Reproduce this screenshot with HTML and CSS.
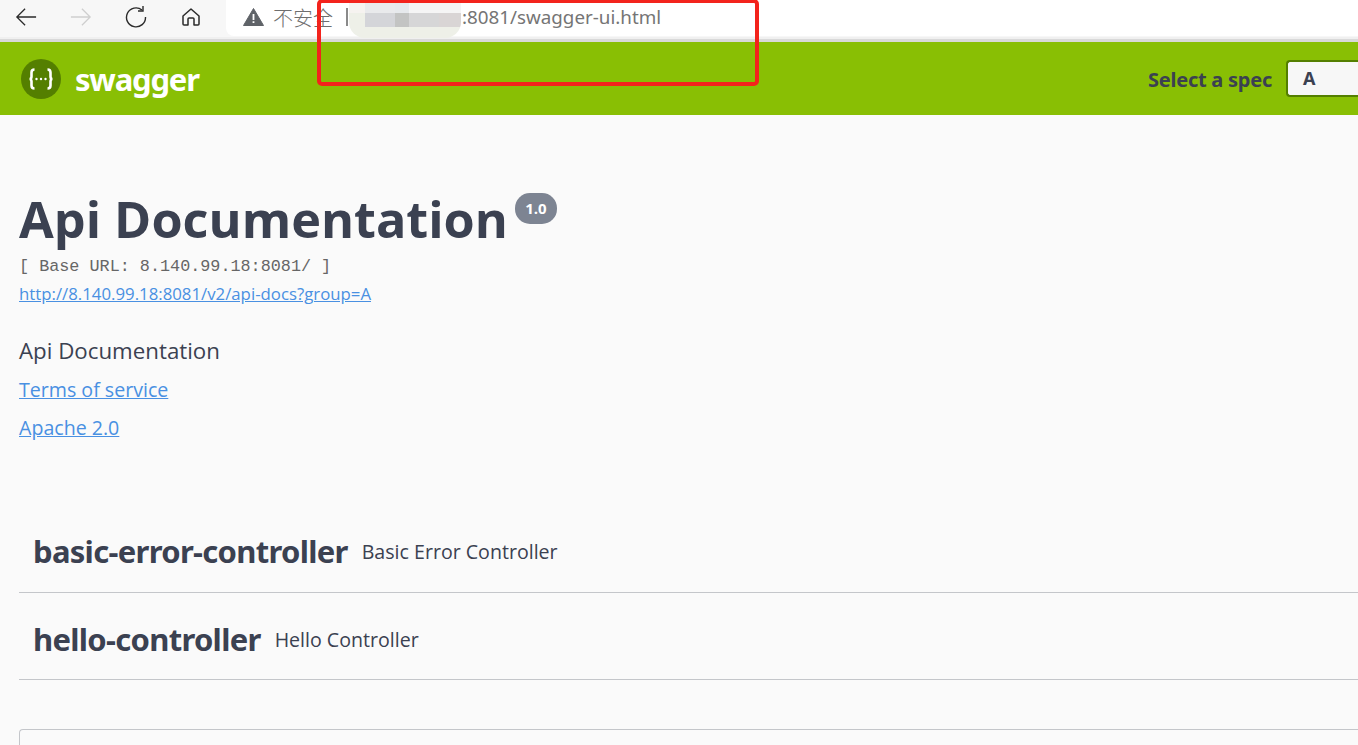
FILE: index.html
```html
<!DOCTYPE html>
<html lang="en">
<head>
<meta charset="UTF-8">
<meta name="viewport" content="width=device-width, initial-scale=1.0">
<title>Swagger UI</title>
<link rel="stylesheet" href="styles.css">
</head>
<body>
  <div class="browser-bar">
    <div class="nav-icons">
      <svg class="nav-back" width="22" height="22" viewBox="0 0 24 24" fill="none" stroke="#2b2b2b" stroke-width="1.4"><path d="M2 12H23M11 3L2 12L11 21"/></svg>
      <svg class="nav-forward" width="22" height="22" viewBox="0 0 24 24" fill="none" stroke="#cfcfcf" stroke-width="1.4"><path d="M1 12H22M13 3L22 12L13 21"/></svg>
      <svg class="nav-reload" width="22" height="22" viewBox="0 0 22 22" fill="none" stroke="#2b2b2b" stroke-width="1.4"><path d="M17 4A9.5 9.5 0 1 0 20.500 11"/><path d="M18 0V5H13"/></svg>
      <svg class="nav-home" width="20" height="20" viewBox="0 0 20 20" fill="none" stroke="#2b2b2b" stroke-width="1.5" stroke-linejoin="round"><path d="M2 9L10 2L18 9V17Q18 18 17 18H13V12Q13 11 12 11H8Q7 11 7 12V18H3Q2 18 2 17Z"/></svg>
    </div>
    <div class="address-bar">
      <svg class="warn-icon" width="21" height="18" viewBox="0 0 21 18"><path d="M10.500 0.500L20.500 17.500H0.500Z" fill="#5f6368" stroke="#5f6368" stroke-linejoin="round"/><path d="M9.600 6H11.400V12H9.600ZM9.600 13.300H11.400V15H9.600Z" fill="#fff"/></svg>
      <span class="not-secure">不安全</span>
      <span class="addr-sep"></span>
      <span class="addr-host"></span>
      <span class="addr-url">:8081/swagger-ui.html</span>
    </div>
  </div>

  <div class="topbar">
    <svg class="logo" width="40" height="40" viewBox="0 0 40 40">
      <circle cx="20" cy="20" r="20" fill="#547f00"/>
      <path d="M13.500 10.500Q10.500 10.500 10.500 13.500V17.500Q10.500 20 8.500 20Q10.500 20 10.500 22.500V26.500Q10.500 29.500 13.500 29.500M26.500 10.500Q29.500 10.500 29.500 13.500V17.500Q29.500 20 31.500 20Q29.500 20 29.500 22.500V26.500Q29.500 29.500 26.500 29.500" fill="none" stroke="#fff" stroke-width="2.600"/>
      <circle cx="15.500" cy="20" r="1.200" fill="#fff"/><circle cx="20" cy="20" r="1.200" fill="#fff"/><circle cx="24.500" cy="20" r="1.200" fill="#fff"/>
    </svg>
    <span class="brand">swagger</span>
    <div class="spec-select">
      <span class="spec-label">Select a spec</span>
      <span class="spec-box">A</span>
    </div>
  </div>

  <div class="content">
    <div class="title-row">
      <h1 class="title">Api Documentation</h1>
      <span class="version">1.0</span>
    </div>
    <div class="base-url">[ Base URL: 8.140.99.18:8081/ ]</div>
    <a class="docs-link" href="#">http://8.140.99.18:8081/v2/api-docs?group=A</a>

    <p class="info-text">Api Documentation</p>
    <a class="info-link terms" href="#">Terms of service</a>
    <a class="info-link license" href="#">Apache 2.0</a>

    <div class="tags">
      <div class="tag"><h3>basic-error-controller</h3><span>Basic Error Controller</span></div>
      <div class="tag"><h3>hello-controller</h3><span>Hello Controller</span></div>
    </div>

    <div class="models"></div>
  </div>

  <div class="red-box"></div>
</body>
</html>
```

FILE: styles.css
```css
html, body {
  margin: 0;
  padding: 0;
  height: 745px;
  overflow: hidden;
}
body {
  background-color: #fafafa;
  color: #3b4151;
  font-family: "Open Sans", sans-serif;
  position: relative;
}
.browser-bar {
  height: 37px;
  background-color: #f7f7f7;
  border-bottom: 5px solid #f0f0f0;
  display: flex;
  position: relative;
}
.browser-bar::after {
  content: "";
  position: absolute;
  left: 0;
  right: 0;
  bottom: -5px;
  height: 3px;
  background-color: #d9d9d9;
}
.nav-icons {
  width: 226px;
  display: flex;
  align-items: center;
  height: 34px;
}
.nav-back { margin-left: 15px; }
.nav-forward { margin-left: 33px; }
.nav-reload { margin-left: 33px; }
.nav-home { margin-left: 34px; }
.address-bar {
  flex: 1;
  height: 36px;
  background-color: #fff;
  border-bottom-left-radius: 8px;
  display: flex;
  align-items: center;
  font-family: "Noto Sans", sans-serif;
  font-size: 18.800px;
  color: #5f6368;
}
.warn-icon { margin-left: 17px; margin-top: -2px; }
.not-secure {
  margin-left: 9px;
  margin-top: -2px;
  font-family: "Noto Sans CJK SC", sans-serif;
  font-size: 20px;
  font-weight: 300;
  color: #6e6e6e;
}
.addr-sep {
  width: 2px;
  height: 18px;
  background-color: #8a8a8a;
  margin-left: 13px;
  margin-top: -2px;
}
.addr-host {
  width: 112px;
  height: 38px;
  margin-left: 1px;
  align-self: flex-start;
  position: relative;
  z-index: 1;
  border-radius: 0 0 16px 16px;
  background:
    linear-gradient(90deg, transparent 0 16px, #d4d5d9 16px 46px, #c3c4c3 46px 60px, #d6d6d7 60px 90px, #d9d5d5 90px 112px) 0 13px / 100% 14px no-repeat,
    linear-gradient(90deg, #f6f3f0 0 16px, #e9eaec 16px 46px, #e6e9ec 46px 60px, #f5f5f5 60px 112px) 0 0 / 100% 13px no-repeat,
    #eef0e8;
}
.addr-url {
  color: #757575;
  margin-top: -2px;
  margin-left: 1px;
}
.topbar {
  height: 73px;
  background-color: #89bf04;
  display: flex;
  align-items: center;
  padding-left: 21px;
}
.brand {
  margin-left: 14px;
  font-family: "Noto Sans", sans-serif;
  font-size: 31px;
  font-weight: 700;
  letter-spacing: -1.2px;
  color: #fff;
}
.spec-select {
  margin-left: auto;
  display: flex;
  align-items: center;
}
.spec-label {
  margin-top: 2px;
  font-family: "Noto Sans", sans-serif;
  font-size: 20px;
  font-weight: 700;
  letter-spacing: -0.25px;
  color: #3b4151;
}
.spec-box {
  width: 73px;
  height: 37px;
  margin-left: 14px;
  margin-right: -1px;
  padding-left: 15px;
  box-sizing: border-box;
  background-color: #f7f7f7;
  border: 2px solid #547f00;
  border-right: none;
  border-radius: 4px 0 0 4px;
  font-family: "Noto Sans", sans-serif;
  font-size: 18px;
  font-weight: 700;
  line-height: 33px;
}
.content {
  padding-left: 19px;
}
.title-row {
  display: flex;
  align-items: flex-start;
  padding-top: 72px;
  height: 67px;
}
.title {
  margin: 0;
  font-family: "Open Sans", sans-serif;
  font-size: 50.400px;
  font-weight: 700;
  line-height: 64px;
}
.version {
  margin-left: 7px;
  margin-top: 6px;
  width: 42px;
  height: 31px;
  border-radius: 15px;
  background-color: #7d8492;
  color: #fff;
  font-size: 15px;
  font-weight: 700;
  line-height: 31px;
  text-align: center;
}
.base-url {
  margin-top: 3px;
  font-family: "Liberation Mono", monospace;
  font-size: 16.800px;
  line-height: 20px;
  color: #666;
}
.docs-link {
  display: block;
  margin-top: 7px;
  font-size: 16.800px;
  line-height: 20px;
  color: #4990e2;
}
.info-text {
  margin: 33px 0 0;
  font-size: 22.300px;
  line-height: 28px;
}
.info-link {
  display: block;
  font-size: 19.600px;
  line-height: 26px;
  color: #4990e2;
}
.terms { margin-top: 12px; }
.license { margin-top: 12px; }
.tags {
  margin-top: 65px;
}
.tag {
  height: 87px;
  box-sizing: border-box;
  padding-left: 14px;
  padding-top: 4px;
  display: flex;
  align-items: center;
  gap: 14px;
  border-bottom: 1px solid #c4c6ca;
}
.tag h3 {
  margin: 0;
  font-family: "Noto Sans", sans-serif;
  font-size: 31px;
  font-weight: 700;
  letter-spacing: -0.7px;
  color: #3b4151;
}
.tag span {
  font-size: 19.600px;
}
.tag + .tag {
  padding-top: 6px;
}
.models {
  margin-top: 49px;
  height: 15px;
  border: 1px solid #c4c6ca;
  border-right: none;
  border-bottom: none;
  border-radius: 4px 0 0 0;
}
.red-box {
  position: absolute;
  left: 317px;
  top: -1px;
  width: 442px;
  height: 87px;
  box-sizing: border-box;
  border: 4px solid #f3231c;
  border-radius: 5px;
  z-index: 2;
}
```
